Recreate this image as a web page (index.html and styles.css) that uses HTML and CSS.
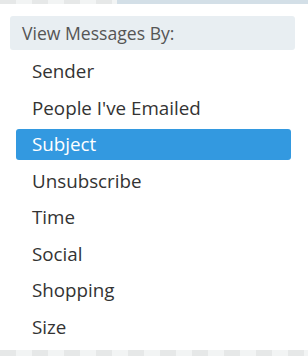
FILE: index.html
```html
<!DOCTYPE html>
<html lang="en">
<head>
    <meta charset="UTF-8">
    <meta name="viewport" content="width=device-width, initial-scale=1.0">
    <title>View Messages By</title>
    <link rel="stylesheet" href="styles.css">
</head>
<body>
    <div class="backdrop-top">
        <div class="stripes"></div>
        <div class="toolbar"></div>
    </div>

    <div class="menu">
        <div class="menu-header">View Messages By:</div>
        <ul class="menu-list">
            <li>Sender</li>
            <li>People I've Emailed</li>
            <li class="active">Subject</li>
            <li>Unsubscribe</li>
            <li>Time</li>
            <li>Social</li>
            <li>Shopping</li>
            <li>Size</li>
        </ul>
    </div>

    <div class="backdrop-bottom stripes"></div>
</body>
</html>
```

FILE: styles.css
```css
body {
    font-family: 'Open Sans', 'Noto Sans', sans-serif;
    margin: 0;
    padding: 0;
    background-color: #fff;
    width: 308px;
    height: 356px;
    overflow: hidden;
}
.backdrop-top {
    display: flex;
    height: 4px;
}
.stripes {
    background: repeating-linear-gradient(90deg, #e6e8e8 0, #e6e8e8 16px, #f2f4f4 16px, #f2f4f4 32px);
}
.backdrop-top .stripes {
    width: 117px;
}
.toolbar {
    flex: 1;
    background-color: #d3dfe7;
}
.menu {
    background-color: #fff;
    width: 306px;
    height: 346px;
    padding: 12px 0 0 0;
    box-sizing: border-box;
    border-radius: 0 0 4px 4px;
}
.menu-header {
    margin: 0 11px 0 10px;
    height: 34px;
    line-height: 34px;
    padding-left: 12px;
    background-color: #e8eef2;
    border-radius: 3px;
    color: #555;
    font-size: 17.6px;
}
.menu-list {
    list-style: none;
    margin: 6px 0 0 0;
    padding: 0;
}
.menu-list li {
    margin: 0 15px 5.5px 16px;
    height: 31px;
    line-height: 31px;
    padding-left: 16px;
    color: #333;
    font-size: 18.8px;
    border-radius: 3px;
}
.menu-list li.active {
    background-color: #3399e0;
    color: #fff;
}
.backdrop-bottom {
    height: 6px;
}
```
